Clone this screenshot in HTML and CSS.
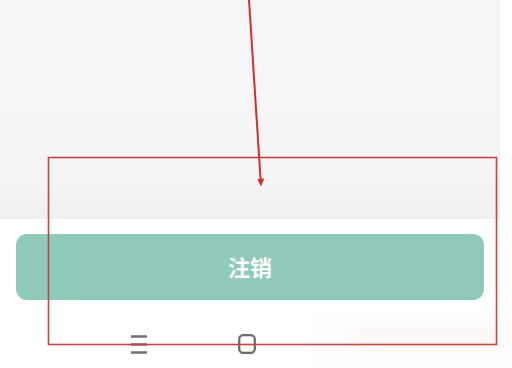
FILE: index.html
```html
<!DOCTYPE html>
<html lang="zh">
<head>
<meta charset="utf-8">
<link rel="stylesheet" href="styles.css">
</head>
<body>
<div class="screen">
  <div class="content"></div>
  <div class="footer">
    <button class="logout">注销</button>
  </div>
  <nav class="navbar">
    <svg class="nav-icon" width="18" height="20" viewBox="0 0 18 20">
      <path d="M1 2.5h16M1 10.5h16M1 18.5h16" stroke="#707070" stroke-width="2.4" fill="none"/>
    </svg>
    <svg class="nav-icon" width="18" height="20" viewBox="0 0 18 20">
      <rect x="1.2" y="1.2" width="15.6" height="17.6" rx="4" stroke="#6c6c6c" stroke-width="2.3" fill="none"/>
    </svg>
  </nav>
  <div class="watermark"><span class="blur"></span></div>
  <svg class="annotation" width="512" height="368" viewBox="0 0 512 368">
    <rect x="48.5" y="157.5" width="448" height="187" fill="none" stroke="#c4463f" stroke-width="1.6"/>
    <line x1="249" y1="0" x2="260.6" y2="180" stroke="#d2302c" stroke-width="2"/>
    <path d="M257.3 179 L261 186.5 L264.2 178.6 Z" fill="#d2302c"/>
  </svg>
</div>
</body>
</html>
```
FILE: styles.css
```css
html, body {
  margin: 0;
  padding: 0;
  background: #ffffff;
}
.screen {
  position: relative;
  width: 512px;
  height: 368px;
  overflow: hidden;
  display: flex;
  flex-direction: column;
  font-family: "Noto Sans CJK SC", "Noto Sans", sans-serif;
}
.content {
  width: 500px;
  height: 219px;
  flex: none;
  background: linear-gradient(#f6f6f6 0%, #f5f5f5 75%, #f0f0f0 100%);
}
.footer {
  padding: 15px 28px 0 16px;
}
.logout {
  display: flex;
  align-items: center;
  justify-content: center;
  width: 468px;
  height: 66px;
  border: none;
  border-radius: 11px;
  background: #8fcabb;
  color: #ffffff;
  font-family: "Noto Sans CJK SC", sans-serif;
  font-size: 22px;
  font-weight: 700;
  padding: 0 0 3px 0;
}
.navbar {
  display: flex;
  gap: 90px;
  padding: 34px 0 0 130px;
}
.nav-icon {
  display: block;
}
.watermark {
  position: absolute;
  left: 310px;
  top: 315px;
  width: 202px;
  height: 53px;
  background: #fefdfd;
  overflow: hidden;
}
.blur {
  position: absolute;
  left: 40px;
  top: 16px;
  width: 150px;
  height: 16px;
  border-radius: 8px;
  background: rgba(240, 205, 200, 0.22);
  filter: blur(9px);
}
.annotation {
  position: absolute;
  left: 0;
  top: 0;
  pointer-events: none;
}
```
